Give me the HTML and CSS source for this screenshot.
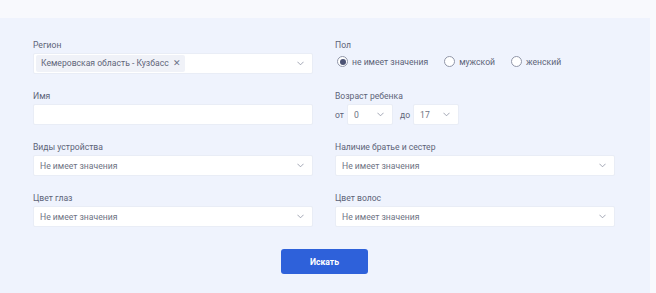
FILE: index.html
```html
<!DOCTYPE html>
<html lang="ru">
<head>
    <meta charset="UTF-8">
    <title>Поиск</title>
    <link rel="stylesheet" href="styles.css">
</head>
<body>
    <div class="topbar"></div>

    <div class="panel">
        <div class="grid">
            <div class="field">
                <label>Регион</label>
                <div class="select">
                    <span class="tag">Кемеровская область - Кузбасс <span class="tag-x">&#x2715;</span></span>
                    <svg class="arrow" viewBox="0 0 8 5"><path d="M0.5 0.5 L4 4 L7.5 0.5"/></svg>
                </div>
            </div>
            <div class="field">
                <label>Пол</label>
                <div class="radios">
                    <span class="radio checked"></span><span class="radio-text">не имеет значения</span>
                    <span class="radio"></span><span class="radio-text">мужской</span>
                    <span class="radio"></span><span class="radio-text">женский</span>
                </div>
            </div>

            <div class="field">
                <label>Имя</label>
                <div class="input"></div>
            </div>
            <div class="field">
                <label>Возраст ребенка</label>
                <div class="age">
                    <span class="age-label">от</span>
                    <div class="select small">
                        <span class="value">0</span>
                        <svg class="arrow" viewBox="0 0 8 5"><path d="M0.5 0.5 L4 4 L7.5 0.5"/></svg>
                    </div>
                    <span class="age-label">до</span>
                    <div class="select small">
                        <span class="value">17</span>
                        <svg class="arrow" viewBox="0 0 8 5"><path d="M0.5 0.5 L4 4 L7.5 0.5"/></svg>
                    </div>
                </div>
            </div>

            <div class="field">
                <label>Виды устройства</label>
                <div class="select">
                    <span class="value">Не имеет значения</span>
                    <svg class="arrow" viewBox="0 0 8 5"><path d="M0.5 0.5 L4 4 L7.5 0.5"/></svg>
                </div>
            </div>
            <div class="field">
                <label>Наличие братье и сестер</label>
                <div class="select">
                    <span class="value">Не имеет значения</span>
                    <svg class="arrow" viewBox="0 0 8 5"><path d="M0.5 0.5 L4 4 L7.5 0.5"/></svg>
                </div>
            </div>

            <div class="field">
                <label>Цвет глаз</label>
                <div class="select">
                    <span class="value">Не имеет значения</span>
                    <svg class="arrow" viewBox="0 0 8 5"><path d="M0.5 0.5 L4 4 L7.5 0.5"/></svg>
                </div>
            </div>
            <div class="field">
                <label>Цвет волос</label>
                <div class="select">
                    <span class="value">Не имеет значения</span>
                    <svg class="arrow" viewBox="0 0 8 5"><path d="M0.5 0.5 L4 4 L7.5 0.5"/></svg>
                </div>
            </div>
        </div>

        <div class="actions">
            <button class="search">Искать</button>
        </div>
    </div>
</body>
</html>
```

FILE: styles.css
```css
body {
    margin: 0;
    font-family: Roboto, "Liberation Sans", sans-serif;
    font-size: 8.6px;
    color: #5d6378;
    background-color: #f8f9fd;
    height: 293px;
    overflow: hidden;
}

.topbar {
    height: 18px;
    background-color: #f8f9fd;
}

.panel {
    width: 650px;
    height: 275px;
    box-sizing: border-box;
    background-color: #eff3fd;
    padding: 21px 35px 0 33px;
}

.grid {
    display: grid;
    grid-template-columns: 280px 280px;
    column-gap: 22px;
    row-gap: 16px;
}

.field label {
    display: block;
    height: 12px;
    line-height: 12px;
    margin-bottom: 2px;
}

.select,
.input {
    height: 21px;
    box-sizing: border-box;
    background-color: #fff;
    border: 1px solid #e9edf6;
    border-radius: 2px;
    display: flex;
    align-items: center;
    padding: 0 8px 0 6px;
    color: #6e7384;
}

.select .value {
    flex: 1;
}

.arrow {
    width: 7px;
    height: 5px;
    fill: none;
    stroke: #8b90a2;
    stroke-width: 0.9;
    margin-left: auto;
}

.tag {
    margin-left: -4px;
    background-color: #f0f2f8;
    height: 17px;
    line-height: 17px;
    padding: 0 4px 0 5px;
    border-radius: 2px;
    color: #5f6579;
}

.tag-x {
    margin-left: 2px;
    font-size: 9px;
    color: #6b7186;
}

.radios {
    display: flex;
    align-items: center;
    height: 17px;
    margin-top: 2px;
    margin-left: 2px;
}

.radio {
    width: 11px;
    height: 11px;
    box-sizing: border-box;
    border: 1px solid #9196a8;
    border-radius: 50%;
    background-color: #fff;
    display: flex;
    align-items: center;
    justify-content: center;
    margin-right: 4px;
}

.radio.checked::after {
    content: "";
    width: 6px;
    height: 6px;
    border-radius: 50%;
    background-color: #4b5274;
}

.radio-text {
    margin-right: 16px;
}

.age {
    display: flex;
    align-items: center;
}

.age-label {
    margin-right: 3px;
}

.select.small {
    width: 46px;
    padding-left: 6px;
    margin-right: 7px;
}

.actions {
    display: flex;
    justify-content: center;
    margin-top: 22px;
    padding-left: 1px;
}

.search {
    width: 87px;
    height: 25px;
    border: none;
    border-radius: 3px;
    background-color: #2e61da;
    color: #fff;
    font-family: Roboto, "Liberation Sans", sans-serif;
    font-size: 8.6px;
    font-weight: bold;
    cursor: pointer;
}
```
